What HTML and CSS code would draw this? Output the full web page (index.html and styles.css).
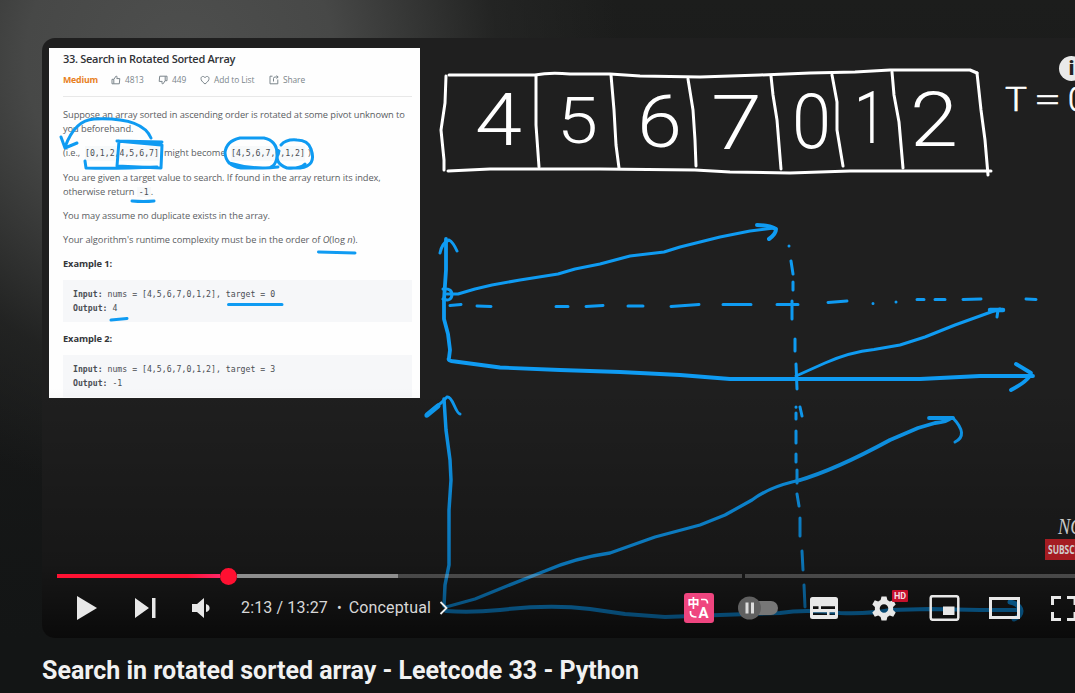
FILE: index.html
```html
<!DOCTYPE html>
<html lang="en">
<head>
<meta charset="utf-8">
<title>Search in rotated sorted array - Leetcode 33 - Python</title>
<link rel="stylesheet" href="styles.css">
</head>
<body>
<main class="page">
  <section class="player">
    <article class="problem">
      <h2 class="problem-title">33. Search in Rotated Sorted Array</h2>
      <div class="meta">
        <span class="difficulty">Medium</span>
        <span class="meta-item likes"><svg viewBox="0 0 10 10"><path d="M1 4.3h1.8v4.5H1zM2.8 4.4 5 1.1c1.3 0 1.2 1 .8 2.5h3L8.3 8.8H2.8"/></svg>4813</span>
        <span class="meta-item dislikes"><svg viewBox="0 0 10 10"><path d="M9 5.7H7.2V1.2H9zM7.2 5.6 5 8.9c-1.3 0-1.2-1-.8-2.5h-3l.5-5.2h5.5"/></svg>449</span>
        <span class="meta-item favorite"><svg viewBox="0 0 10 10"><path d="M5 9C2 6.600 1 5.300 1 3.500 1 1 4 .8 5 2.700 6 .8 9 1 9 3.500 9 5.300 8 6.600 5 9z"/></svg>Add to List</span>
        <span class="meta-item share"><svg viewBox="0 0 10 10"><path d="M3.500 1.200H1v7.600h7.800V4.500M4.500 6.500V3.500q0-1.500 1.600-1.500h2.700M7.500.6 9.200 2 7.500 3.500"/></svg>Share</span>
      </div>
      <div class="statement">
        <p class="intro">Suppose an array sorted in ascending order is rotated at some pivot unknown to<br>you beforehand.</p>
        <p class="sample"><span class="ie">(i.e.,</span><code>[0,1,2,4,5,6,7]</code><span class="become">might become</span><code>[4,5,6,7,0,1,2]</code><span>)</span></p>
        <p class="given">You are given a target value to search. If found in the array return its index,<br>otherwise return <code class="minus">-1</code>.</p>
        <p class="assume">You may assume no duplicate exists in the array.</p>
        <p class="runtime">Your algorithm's runtime complexity must be in the order of <i>O</i>(log <i>n</i>).</p>
        <h3>Example 1:</h3>
        <pre><b>Input:</b> nums = [4,5,6,7,0,1,2], target = 0
<b>Output:</b> 4</pre>
        <h3>Example 2:</h3>
        <pre class="last"><b>Input:</b> nums = [4,5,6,7,0,1,2], target = 3
<b>Output:</b> -1</pre>
      </div>
    </article>

    <svg class="board" viewBox="42 38 1033 600">
      <g class="chalk">
        <path d="M449 75H535Q550 72 570 74H610L640 76 700 77 760 75 810 73 855 72 890 70H938L970 70 977 73"/>
        <path d="M448 171 490 169H600L695 170 730 172 790 173 850 171H880L991 171"/>
        <path d="M446 76 445 103 441 130 444 160 444 170M536 76V125L539 167M611 75 614 110 616 145 619 168M688 79 693 110 695 140 696 166M771 76 773 95 777 120 781 169M832 75 837 102V130L843 166M892 72 894 95 899 122 903 168M977 73 981 110 985 140 988 175"/>
      </g>
      <g class="digits">
        <text x="475" y="145" textLength="47" lengthAdjust="spacingAndGlyphs">4</text>
        <text class="five" x="557" y="142.500" textLength="41" lengthAdjust="spacingAndGlyphs">5</text>
        <text x="637" y="147" textLength="45" lengthAdjust="spacingAndGlyphs">6</text>
        <text class="seven" x="711" y="149" textLength="51" lengthAdjust="spacingAndGlyphs">7</text>
        <text class="seven" x="792" y="148" textLength="39" lengthAdjust="spacingAndGlyphs">0</text>
        <text x="854" y="143" textLength="32" lengthAdjust="spacingAndGlyphs">1</text>
        <text class="seven" x="910" y="146" textLength="48" lengthAdjust="spacingAndGlyphs">2</text>
        <text class="small" x="1005" y="111" textLength="22" lengthAdjust="spacingAndGlyphs">T</text>
        <text class="small" x="1034" y="111" textLength="27" lengthAdjust="spacingAndGlyphs">=</text>
        <text class="small" x="1068" y="111">0</text>
      </g>
      <g class="ink">
        <path d="M446 239V270L444 300V319L448 334 450 350 449 358Q447 361 455 361.500L500 367.500 560 370 620 372 680 375 730 379H850L920 379 980 376H1033" stroke-width="3.800"/>
        <path d="M440 253Q442 243 449 240 453 242 457 251M443 289Q452 288 452 295 451 302 443 299M447 294 458 294 475 289 492 285 520 280 558 274 575 269 600 264 630 256 664 252 680 247 720 237 750 231 774 228"/>
        <path d="M757 225Q769 225 776 229 776 234 769 239" stroke-width="4"/>
        <path d="M450 305.500 461 304.500M477 306 491 306.500M556 306.500H568M586 306.500 603 305.500M628 306H643M671 306.500 699 304.500M723 304.500H751M777 304.500H798M828 302.500 847 301M873 303.500v.1M896 302v.1M917 299.500H924M935 299.500H945M963 299.500 981 299M1026 299 1036 299.500"/>
        <path d="M789 246v.1M791 261 793 274M793 282V290M792 301V319M795 339V351M796 364 797 389M796 407v.2M800 407 802 416M796 413V419M796 431V443M796 454V462M797 470V483M797 494 799 506M800 518V536M802 551 803 570M804 585 805 607"/>
        <path d="M796 376 825 363Q850 352 874 349.500L900 345 925 337 955 325 991 312 1000 309M990 309.500H1003M998 310 997 317"/>
        <path d="M990 310H1003" stroke-width="4.500"/>
        <path d="M1016 364 1031 373Q1030 380 1011 390" stroke-width="3.800"/>
        <path d="M444 399 446 430 450 460 451 480 449 510V565L445 585 444 606" stroke-width="3.500"/>
        <path d="M426 416Q435 407 441 403L447 397Q450 396 454 405T460 414"/>
        <path d="M427 415 438 406" stroke-width="5"/>
        <path d="M446 607 475 599 507 586 545 571 Q575 558 610 553L655 537 700 525 725 515 752 500Q768 488 792 482L800 480" stroke-width="3.300"/>
        <path d="M797 481 Q835 470 890 440L918 428 935 423Q947 422 951 418M929 418 953 418" stroke-width="3.800"/>
        <path d="M953 418Q969 435 955 442"/>
        <path d="M446 611Q470 613 500 610 550 604 590 609L625 614 665 617 720 615 780 613Q805 609 840 613 870 614 890 610L930 609 980 610H1020" stroke-width="4"/>
        <path d="M1010 602Q1020 604 1021 611 1021 616 1014 619" stroke-width="5"/>
        <path d="M65 147Q75 120 94 119 142 117 151 138M61 137 65 148 77 143M85 161 86 168Q113 169 157 167M119 141 117 166 161 168 162 145M117 141 161 145M117 141 162 142"/>
        <path d="M240 138H264Q278 141 277 156 276 169 264 168H241Q226 166 225 153 226 141 240 138M281 145Q286 139 297 140 308 140 311 149 317 166 300 168H287Q273 163 279 151M229 163Q252 170 278 167M305 164Q300 169 287 168"/>
        <path d="M132 201Q144 202 154 201M318.500 252 355 253M228.500 304.500 282 304.500M111 320 127 318.500" stroke-width="3"/>
      </g>
    </svg>

    <div class="shade"></div>
    <div class="info">i</div>
    <div class="watermark"><span class="channel">NC</span><span class="subscribe"><span>SUBSCRIBE</span></span></div>

    <div class="chrome">
      <div class="progress">
        <div class="played"></div><div class="knob"></div><div class="buffered"></div><div class="rest"></div><div class="chapter"></div>
      </div>
      <div class="controls">
        <svg class="play" viewBox="0 0 20 24"><path d="M0 0 20 12 0 24z"/></svg>
        <svg class="next" viewBox="0 0 21 20"><path d="M0 0 14 10 0 20zM17 0h3.500v20H17z"/></svg>
        <svg class="volume" viewBox="0 0 18 20"><path d="M0 6h5l7-6v20l-7-6H0zM14 6q3.600 1 3.600 4T14 14z"/></svg>
        <span class="time">2:13 / 13:27</span><span class="dot">•</span><span class="chapter-name">Conceptual</span>
        <svg class="chevron" viewBox="0 0 8 14"><path d="M1 1l6 6-6 6"/></svg>
        <svg class="translate" viewBox="0 0 30 30"><rect width="30" height="30" rx="3"/><text x="3.500" y="14.800" class="han">中</text><text x="14.500" y="25" class="latin">A</text><path d="M17 6.500h3.500q3 0 3 4M6.500 18v2q0 4 6 4"/></svg>
        <svg class="autoplay" viewBox="0 0 42 24"><rect x="11" y="5" width="29" height="14" rx="7" fill="#777"/><circle cx="11.500" cy="12" r="11.500" fill="#606060"/><path d="M7.500 6.500h3v11h-3zM13 6.500h3v11h-3z" fill="#ddd"/></svg>
        <svg class="captions" viewBox="0 0 28 22"><path fill-rule="evenodd" d="M2.500 0h23Q28 0 28 2.500v17q0 2.500-2.500 2.500h-23Q0 22 0 19.500v-17Q0 0 2.500 0zM3 9.300v2.600h5.500V9.300zM11 9.300v2.600h14V9.300zM3 15.300v2.600h14v-2.600zM19.500 15.300v2.600H25v-2.600z"/></svg>
        <div class="settings">
          <svg viewBox="-12 -12 24 24"><path fill-rule="evenodd" d="M-2.500-12h5l.9 3.500 2.400 1.400L9.200-8.200l2.500 4.300L9.100-1.400v2.800l2.600 2.500-2.500 4.300-3.400-1.100-2.400 1.400-.9 3.500h-5l-.9-3.500-2.400-1.400-3.400 1.100-2.500-4.300 2.600-2.500v-2.800l-2.600-2.500 2.500-4.300 3.400 1.100 2.400-1.400zM0-4.300A4.300 4.300 0 1 0 0 4.300 4.300 4.300 0 1 0 0-4.300z"/></svg>
          <span class="hd">HD</span>
        </div>
        <svg class="mini" viewBox="0 0 30 26"><rect class="line" x="1.200" y="1.200" width="27.600" height="23.600" rx="2"/><path d="M13.500 11.500h11.500v8.500H13.500z"/></svg>
        <svg class="theater" viewBox="0 0 31 22"><rect class="line" x="1.500" y="1.500" width="28" height="19"/></svg>
        <svg class="full" viewBox="0 0 32 25"><path class="line" d="M1.500 9V1.500H10M1.500 16v7.500H10M16 1.500h8V9M16 23.500h8V16"/></svg>
      </div>
    </div>
  </section>
  <h1 class="video-title">Search in rotated sorted array - Leetcode 33 - Python</h1>
</main>
</body>
</html>
```
FILE: styles.css
```css
* { box-sizing: border-box; }
body { margin: 0; background: #131515; font-family: Roboto, sans-serif; }
svg { display: block; flex: none; }
.page {
  height: 693px;
  overflow: hidden;
  padding: 38px 0 0 42px;
  background:
    radial-gradient(ellipse 440px 440px at 180px 60px, #4e4f4e 0%, #474847 35%, rgba(38, 39, 38, .7) 72%, rgba(20, 21, 21, 0) 100%),
    linear-gradient(#1c1d1c 0, #171818 350px, #131515 640px);
}
.player {
  position: relative;
  display: flex;
  flex-direction: column;
  justify-content: space-between;
  width: 1033px;
  height: 600px;
  padding: 10px 0 0 7px;
  overflow: hidden;
  background: #1f1f1f;
  border-radius: 13px 0 0 13px;
}
.problem {
  width: 371px;
  height: 350px;
  padding: 3px 8px 0 14px;
  overflow: hidden;
  background: #fefefe;
  color: #5a5d62;
  font-family: "Open Sans", "Noto Sans", sans-serif;
  font-size: 9.3px;
  line-height: 14.2px;
  white-space: nowrap;
}
.problem-title { margin: 0; font-size: 11px; line-height: 15px; font-weight: 600; color: #303236; letter-spacing: -.29px; }
.meta { display: flex; align-items: center; height: 31px; padding-bottom: 1px; border-bottom: 1px solid #e8e8e8; font-size: 8.4px; color: #7b858b; letter-spacing: -.1px; }
.difficulty { width: 48px; color: #e8811f; font-weight: 700; font-size: 8.8px; letter-spacing: -.2px; }
.meta-item { display: flex; align-items: center; gap: 4px; }
.meta-item svg { width: 10px; height: 10px; fill: none; stroke: #7b858b; stroke-width: 1; }
.likes { width: 47px; }
.dislikes { width: 42px; }
.favorite { width: 69px; }
.statement { padding-top: 11px; letter-spacing: -.085px; }
.statement p { margin: 0 0 10px; }
code, pre { font-family: "DejaVu Sans Mono", monospace; font-size: 8.2px; color: #4a4e54; letter-spacing: 0; }
code { background: #f7f9fa; }
.sample { display: flex; }
.ie { width: 16px; }
.become { width: 61px; margin-left: 2px; letter-spacing: -.05px; }
.sample code { margin: 0 3px 0 6px; }
.minus { padding: 0 2px; }
.runtime { letter-spacing: -.05px; }
.statement h3 { margin: 0; font-size: 9.3px; line-height: 14px; color: #34363a; font-weight: 700; }
pre { height: 42px; margin: 9px 0 10px; padding: 7px 10px; background: #f6f7f9; line-height: 14px; }

.board { position: absolute; inset: 0; width: 1033px; height: 600px; fill: none; stroke-linecap: round; stroke-linejoin: round; }
.chalk { stroke: #fff; stroke-width: 3; }
.digits { fill: #fff; font: 300 73px Roboto, sans-serif; }
.digits .five { font-size: 65px; }
.digits .seven { font-size: 76px; }
.digits .small { font-size: 33px; stroke: #fff; stroke-width: .6; }
.ink { stroke: #0f9bf2; stroke-width: 3; }
.shade { position: absolute; inset: 350px 0 0 0; background: linear-gradient(rgba(0,0,0,0), rgba(0,0,0,.13) 35%, rgba(0,0,0,.26) 70%, rgba(0,0,0,.48) 87%, rgba(0,0,0,.68)); }
.info { position: absolute; left: 1017px; top: 18px; width: 25px; height: 25px; border-radius: 50%; background: #e9e9e9; color: #222; font: 900 20px/25px Roboto, sans-serif; text-align: center; }
.watermark { position: absolute; left: 1003px; top: 476px; display: flex; flex-direction: column; }
.channel { padding-left: 13px; height: 25px; color: #c8c8c8; font: italic 23px/25px "Liberation Serif", serif; transform: scaleX(.8); transform-origin: 13px 0; }
.subscribe { padding: 0 3px; width: 70px; height: 21px; background: #a51c22; color: #d0cccc; font: 700 12px/21px "Open Sans", sans-serif; }
.subscribe span { display: inline-block; transform: scaleX(.7); transform-origin: 0 0; }

.chrome { position: relative; height: 72px; margin-left: 8px; }
.progress { display: flex; align-items: center; height: 20px; }
.progress div { height: 4px; flex: none; }
.played { width: 163px; background: linear-gradient(90deg, #ff1233 80%, #ff2768); }
.progress .knob { width: 17px; height: 17px; border-radius: 50%; background: #ff1031; }
.buffered { width: 161px; background: #8e8e8e; }
.rest { width: 344px; background: rgba(255,255,255,.22); }
.chapter { width: 340px; margin-left: 3px; background: rgba(255,255,255,.22); }
.controls { display: flex; align-items: center; height: 44px; fill: #e8e8e8; color: #d8d8d8; font-size: 16px; white-space: nowrap; }
.play { width: 20px; height: 24px; margin-left: 20px; }
.next { width: 21px; height: 20px; margin-left: 38px; }
.volume { width: 18px; height: 20px; margin-left: 36px; }
.time { width: 87px; margin: -2px 0 0 31px; letter-spacing: .14px; }
.dot { width: 7px; margin-left: 9px; font-size: 14px; }
.chapter-name { width: 85px; margin: -1px 0 0 7px; letter-spacing: .15px; }
.chevron { width: 9px; height: 14px; margin-left: 8px; fill: none; stroke: #eee; stroke-width: 1.8; }
.translate { width: 30px; height: 30px; margin-left: 236px; fill: #ef457f; }
.translate text { fill: #fff; font-weight: 700; }
.translate .han { font-size: 12px; font-family: "Noto Sans CJK SC", sans-serif; }
.translate .latin { font-size: 15px; }
.translate path { fill: none; stroke: #fff; stroke-width: 1.7; }
.autoplay { width: 42px; height: 24px; margin-left: 24px; }
.captions { width: 28px; height: 22px; margin-left: 30px; }
.settings { position: relative; margin-left: 34px; }
.settings svg { width: 24px; height: 25px; }
.hd { position: absolute; left: 20px; top: -6px; width: 16px; height: 12px; border-radius: 1px; background: #c5102c; color: #f3dfe2; font: 700 9px/12px Roboto, sans-serif; text-align: center; }
.mini { width: 31px; height: 26px; margin-left: 33px; }
.theater { width: 31px; height: 22px; margin-left: 29px; }
.full { width: 32px; height: 25px; margin-left: 31px; }
.line { fill: none; stroke: #e8e8e8; stroke-width: 2.5; }
.theater .line, .full .line { stroke-width: 3; }
.video-title { margin: 18px 0 0; color: #f1f1f1; font-size: 25px; line-height: 30px; font-weight: 700; white-space: nowrap; }
```
